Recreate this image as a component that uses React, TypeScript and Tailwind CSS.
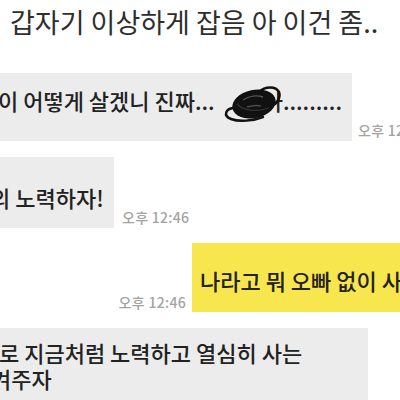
import React from 'react';

// 카톡 대화 캡처 (잘린 화면)

const Time = ({ text, className = '' }: { text: string; className?: string }) => (
  <span className={`shrink-0 self-end whitespace-nowrap text-[14px] leading-[16px] tracking-[0.3px] text-[#a3a3a3] ${className}`}>
    {text}
  </span>
);

const Scribble = () => (
  <svg
    width="60"
    height="40"
    viewBox="0 0 60 40"
    className="absolute left-[223px] top-[11px]"
  >
    <ellipse cx="31" cy="20" rx="22" ry="14" transform="rotate(-12 31 20)" fill="#111" />
    <path
      d="M12 24 C2 24 0 32 8 35 C16 38 30 37 40 33"
      fill="none"
      stroke="#111"
      strokeWidth="2.5"
      strokeLinecap="round"
    />
    <path
      d="M36 8 C42 2 53 2 56 8 C58 14 54 20 48 22"
      fill="none"
      stroke="#111"
      strokeWidth="2.5"
      strokeLinecap="round"
    />
    <path d="M20 16 C26 12 34 11 40 13" stroke="#555" strokeWidth="1.5" fill="none" />
    <path d="M24 23 C30 21 34 21 38 22" stroke="#4a4a4a" strokeWidth="1.5" fill="none" />
    <path d="M14 20 C20 27 34 28 46 24" stroke="#333" strokeWidth="1.2" fill="none" />
  </svg>
);

export default function App() {
  return (
    <div className="w-[400px] h-[400px] overflow-hidden bg-white text-[#222] font-medium font-['Noto_Sans_CJK_KR','Noto_Sans',sans-serif]">
      <div className="pl-[10px] pt-[6px] text-[27px] leading-[32px] font-normal text-[#2e2e2e] whitespace-nowrap">
        갑자기 이상하게 잡음 아 이건 좀..
      </div>

      {/* 받은 메시지 1 */}
      <div className="mt-[35px] flex">
        <div className="relative shrink-0 w-[352px] h-[68px] bg-[#ececec] pt-[13px] overflow-hidden">
          <div className="-ml-[2px] text-[22px] leading-[28px] whitespace-nowrap">
            이 어떻게 살겠니 진짜...
            <span className="inline-block w-[48px]" />
            아.........
          </div>
          <Scribble />
        </div>
        <Time text="오후 12:46" className="ml-[6px] mb-[3px]" />
      </div>

      {/* 받은 메시지 2 */}
      <div className="mt-[16px] flex">
        <div className="shrink-0 w-[114px] h-[71px] bg-[#ececec] pt-[26px] overflow-hidden">
          <div className="-ml-[10px] text-[22px] leading-[28px] whitespace-nowrap">의 노력하자!</div>
        </div>
        <Time text="오후 12:46" className="ml-[8px] mb-[3px]" />
      </div>

      {/* 보낸 메시지 */}
      <div className="mt-[15px] flex justify-end">
        <Time text="오후 12:46" className="mr-[6px] mb-[2px]" />
        <div className="shrink-0 w-[208px] h-[69px] bg-[#f8e64f] pt-[23px] pl-[8px] overflow-hidden">
          <div className="text-[22px] leading-[28px] whitespace-nowrap">나라고 뭐 오빠 없이 사는 게</div>
        </div>
      </div>

      {/* 받은 메시지 3 */}
      <div className="mt-[16px] flex">
        <div className="shrink-0 w-[368px] h-[90px] bg-[#ececec] pt-[11px] overflow-hidden">
          <div className="-ml-[1px] text-[22px] leading-[26px] whitespace-nowrap">
            <div>로 지금처럼 노력하고 열심히 사는</div>
            <div className="-ml-[8px]">켜주자</div>
          </div>
        </div>
      </div>
    </div>
  );
}
